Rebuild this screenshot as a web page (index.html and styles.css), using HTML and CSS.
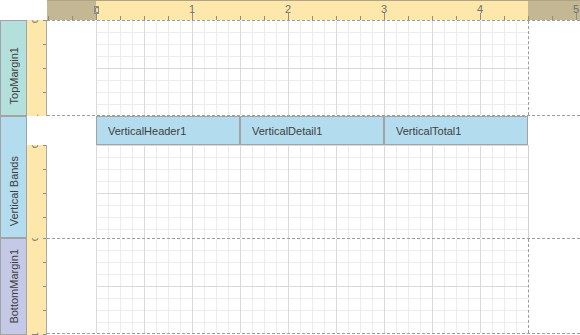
FILE: index.html
```html
<!DOCTYPE html>
<html>
<head>
<meta charset="utf-8">
<link rel="stylesheet" href="styles.css">
</head>
<body>
<div class="designer">
  <div class="corner"></div>
  <div class="hruler">
    <span class="hnum zero"><b>0</b></span><span class="hnum">1</span><span class="hnum">2</span><span class="hnum">3</span><span class="hnum">4</span><span class="hnum">5</span>
  </div>

  <div class="band-label lbl-top"><span>TopMargin1</span></div>
  <div class="vruler"><span class="vnum">0</span><span class="vnum">1</span></div>
  <div class="section sec-top">
    <div class="margin-l"></div>
    <div class="grid grid-top"></div>
    <div class="margin-r"></div>
  </div>

  <div class="band-label lbl-vb"><span>Vertical Bands</span></div>
  <div class="vcol">
    <div class="vgap"></div>
    <div class="vruler vruler-vb"><span class="vnum">0</span><span class="vnum">1</span></div>
  </div>
  <div class="section sec-vb">
    <div class="vb-head">
      <div class="margin-l"></div>
      <div class="cell">VerticalHeader1</div>
      <div class="cell">VerticalDetail1</div>
      <div class="cell">VerticalTotal1</div>
      <div class="margin-r"></div>
    </div>
    <div class="vb-body">
      <div class="margin-l"></div>
      <div class="grid grid-body"></div>
      <div class="margin-r"></div>
    </div>
  </div>

  <div class="band-label lbl-bm"><span>BottomMargin1</span></div>
  <div class="vruler"><span class="vnum">0</span><span class="vnum">1</span></div>
  <div class="section sec-bm">
    <div class="margin-l"></div>
    <div class="grid grid-bm"></div>
    <div class="margin-r"></div>
  </div>
</div>
</body>
</html>
```
FILE: styles.css
```css
* { box-sizing: border-box; margin: 0; padding: 0; }
html, body { width: 580px; height: 335px; overflow: hidden; background: #fff; }
body { font-family: "Liberation Sans", Arial, sans-serif; }

.designer {
  display: grid;
  grid-template-columns: 27px 20px 533px;
  grid-template-rows: 20px 96px 122px 97px;
  width: 580px;
  height: 335px;
}

.corner { grid-column: 1 / 3; background: #fff; }

/* horizontal ruler */
.hruler {
  display: flex;
  padding-left: 1px;
  overflow: hidden;
  border-top: 1px solid #b0a486;
  background:
    linear-gradient(to right, #8c8c8c 1px, transparent 1px) 49px 100% / 96px 7px repeat-x,
    linear-gradient(to right, #8c8c8c 1px, transparent 1px) 1px 100% / 24px 4px repeat-x,
    linear-gradient(to right, #c3b794 0 49px, #fde7aa 49px 481px, #c3b794 481px);
}
.hnum {
  flex: 0 0 96px;
  text-align: center;
  font-size: 11px;
  line-height: 11px;
  padding-top: 3px;
  color: #6f6f6f;
}
.hnum b {
  font-weight: normal;
  display: inline-block;
  border: 1px solid #8c8c8c;
  line-height: 7px;
  height: 8px;
  width: 5px;
  font-size: 9px;
  overflow: hidden;
  margin-top: 2px;
}

/* band labels */
.band-label {
  border: 1px solid #a3a3a3;
  display: flex;
  align-items: center;
  justify-content: center;
}
.band-label span {
  writing-mode: vertical-rl;
  transform: rotate(180deg);
  font-size: 11px;
  color: #3e3e3e;
  white-space: nowrap;
}
.lbl-top { background: #b3e0dc; padding-top: 16px; }
.lbl-vb { background: #b3dcee; padding-top: 29px; }
.lbl-bm { background: #c5c9e8; }

/* vertical rulers */
.vruler {
  display: flex;
  flex-direction: column;
  overflow: hidden;
  border-right: 1px solid #a9a9a9;
  background:
    linear-gradient(to bottom, #8c8c8c 1px, transparent 1px) right 0 top 0 / 3px 24px repeat-y,
    #fde7aa;
}
.vnum {
  flex: 0 0 96px;
  width: 9px;
  margin-left: 4px;
  writing-mode: vertical-rl;
  transform: rotate(180deg);
  text-align: center;
  font-size: 9px;
  line-height: 9px;
  color: #6f6f6f;
}
.vnum:first-child { margin-top: -48px; }

.vcol { display: flex; flex-direction: column; }
.vgap { flex: 0 0 29px; background: #fff; }
.vruler-vb { flex: 1; }

/* sections */
.section { display: flex; }
.margin-l { flex: 0 0 49px; }
.margin-r { flex: 1; }

.grid {
  flex: 0 0 433px;
  background-clip: padding-box;
  background-image:
    linear-gradient(to right, #d9d9d9 1px, transparent 1px),
    linear-gradient(to bottom, #d9d9d9 1px, transparent 1px),
    linear-gradient(to right, #ececec 1px, transparent 1px),
    linear-gradient(to bottom, #ececec 1px, transparent 1px);
  background-size: 48px 48px, 48px 48px, 12px 12px, 12px 12px;
}

.sec-top {
  border-top: 1px dashed #9c9c9c;
  border-bottom: 1px dashed #9c9c9c;
}
.grid-top {
  border-right: 1px dashed #9c9c9c;
  background-position: 0 -1px;
}

.sec-vb { flex-direction: column; }
.vb-head { display: flex; flex: 0 0 29px; }
.cell {
  flex: 0 0 144px;
  background: #b3dcee;
  border: 1px solid #a3a3a3;
  display: flex;
  align-items: center;
  padding-left: 11px;
  font-size: 11px;
  color: #404040;
  white-space: nowrap;
}
.vb-body { display: flex; flex: 1; }
.grid-body {
  border-right: 1px solid #cfcfd6;
  background-position: 0 0;
}

.sec-bm {
  border-top: 1px dashed #9c9c9c;
  border-bottom: 1px dashed #9c9c9c;
  margin-bottom: 1px;
}
.grid-bm {
  border-right: 1px dashed #9c9c9c;
  background-position: 0 -1px;
}
```
